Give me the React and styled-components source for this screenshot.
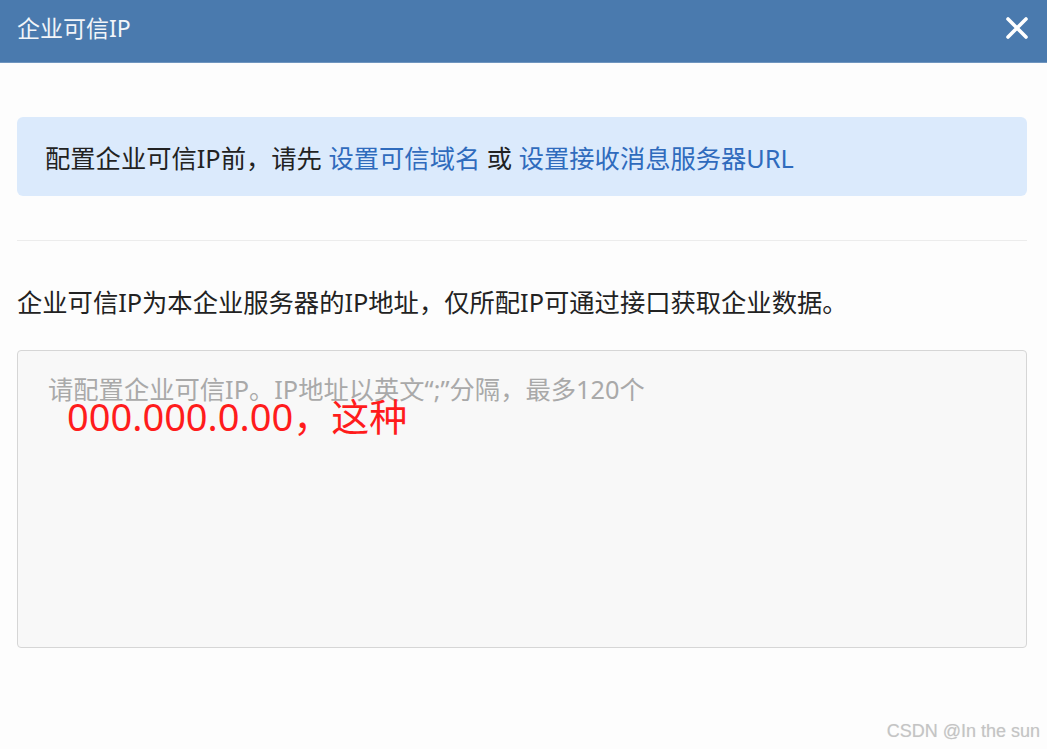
import React from "react";
import styled, { createGlobalStyle } from "styled-components";

const Global = createGlobalStyle`
  html, body { margin: 0; padding: 0; background: #fdfdfd; }
  body { font-family: "Noto Sans", "Noto Sans CJK SC", sans-serif; }
  * { box-sizing: border-box; }
`;

const Dialog = styled.div`
  position: relative;
  width: 1047px;
  height: 749px;
  display: flex;
  flex-direction: column;
  background: #fdfdfd;
  overflow: hidden;
`;

const Header = styled.div`
  height: 63px;
  flex: none;
  background: #4a7aae;
  border-bottom: 1px solid #6f95bf;
  display: flex;
  align-items: center;
  justify-content: space-between;
  padding: 0 18px 0 17px;
`;

const Title = styled.div`
  color: #f2f5f9;
  font-size: 23px;
  line-height: 30px;
  margin-top: -6px;
`;

const Close = styled.button`
  border: 0;
  background: none;
  padding: 0;
  width: 24px;
  height: 24px;
  display: flex;
  align-items: center;
  justify-content: center;
  cursor: pointer;
  margin-top: -6px;
`;

const Body = styled.div`
  padding: 54px 20px 0 17px;
  display: flex;
  flex-direction: column;
`;

const Alert = styled.div`
  height: 79px;
  background: #dbeafc;
  border-radius: 6px;
  padding: 0 0 0 28px;
  display: flex;
  align-items: center;
  font-size: 25.3px;
  color: #222;
  white-space: pre;
`;

const Link = styled.a`
  color: #2f6bbd;
  text-decoration: none;
  cursor: pointer;
`;

const Divider = styled.div`
  margin-top: 44px;
  height: 1px;
  background: #ececec;
`;

const Desc = styled.p`
  margin: 43px 0 0;
  font-size: 25.3px;
  line-height: 36px;
  color: #222;
`;

const Field = styled.div`
  position: relative;
  margin-top: 30px;
`;

const TextArea = styled.textarea`
  display: block;
  width: 100%;
  height: 298px;
  resize: none;
  background: #f8f8f8;
  border: 1px solid #d6d6d6;
  border-radius: 4px;
  padding: 20px 30px;
  font-family: inherit;
  font-size: 25.3px;
  line-height: 36px;
  outline: none;
  &::placeholder { color: #a9a9a9; }
`;

const Note = styled.span`
  position: absolute;
  left: 50px;
  top: 43px;
  color: #ff1c1c;
  font-size: 38px;
  line-height: 46px;
  pointer-events: none;
`;

const Watermark = styled.div`
  position: absolute;
  right: 7px;
  bottom: 7px;
  font-family: "Liberation Sans", Arial, sans-serif;
  font-size: 18px;
  color: #c4c4c4;
  text-shadow: 0 0 1px #e4e4e4;
`;

export default function App() {
  return (
    <>
      <Global />
      <Dialog>
        <Header>
          <Title>企业可信IP</Title>
          <Close aria-label="关闭">
            <svg width="22" height="22" viewBox="0 0 22 22">
              <path d="M2 2 L20 20 M20 2 L2 20" stroke="#fff" strokeWidth="3.6" strokeLinecap="round" />
            </svg>
          </Close>
        </Header>
        <Body>
          <Alert>
            配置企业可信IP前，请先 <Link>设置可信域名</Link> 或 <Link>设置接收消息服务器URL</Link>
          </Alert>
          <Divider />
          <Desc>企业可信IP为本企业服务器的IP地址，仅所配IP可通过接口获取企业数据。</Desc>
          <Field>
            <TextArea placeholder={"请配置企业可信IP。IP地址以英文\u201c;\u201d分隔，最多120个"} />
            <Note>000.000.0.00，这种</Note>
          </Field>
        </Body>
        <Watermark>CSDN @In the sun</Watermark>
      </Dialog>
    </>
  );
}
